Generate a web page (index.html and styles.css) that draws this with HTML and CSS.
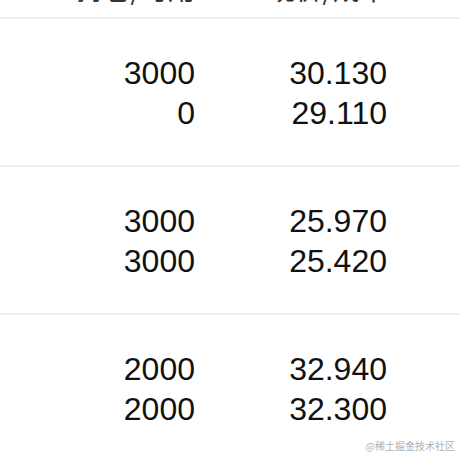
FILE: index.html
```html
<!DOCTYPE html>
<html lang="zh">
<head>
<meta charset="utf-8">
<link rel="stylesheet" href="styles.css">
</head>
<body>
<div class="page">
  <div class="row header">
    <div class="cell">持仓/可用</div>
    <div class="cell">现价/成本</div>
  </div>
  <div class="row group">
    <div class="cell">3000<br>0</div>
    <div class="cell">30.130<br>29.110</div>
  </div>
  <div class="row group">
    <div class="cell">3000<br>3000</div>
    <div class="cell">25.970<br>25.420</div>
  </div>
  <div class="row group">
    <div class="cell">2000<br>2000</div>
    <div class="cell">32.940<br>32.300</div>
  </div>
</div>
<div class="watermark">@稀土掘金技术社区</div>
</body>
</html>
```
FILE: styles.css
```css
html, body {
  margin: 0;
  padding: 0;
  background: #fff;
  overflow: hidden;
}
body {
  width: 460px;
  height: 460px;
  position: relative;
  font-family: "Liberation Sans", "Noto Sans CJK SC", sans-serif;
}
.page {
  margin-top: -36px;
}
.row {
  display: grid;
  grid-template-columns: 195px 192px;
  text-align: right;
}
.header {
  height: 53px;
  line-height: 49px;
  font-size: 27px;
  color: #333;
  font-family: "Noto Sans CJK SC", sans-serif;
}
.group {
  border-top: 2px solid #efefef;
  padding: 34px 0 32px;
  font-size: 32px;
  line-height: 40px;
  color: #111;
}
.watermark {
  position: absolute;
  right: 5px;
  bottom: 7px;
  font-size: 10px;
  color: #b0b0b0;
  font-family: "Noto Sans CJK SC", sans-serif;
}
```
